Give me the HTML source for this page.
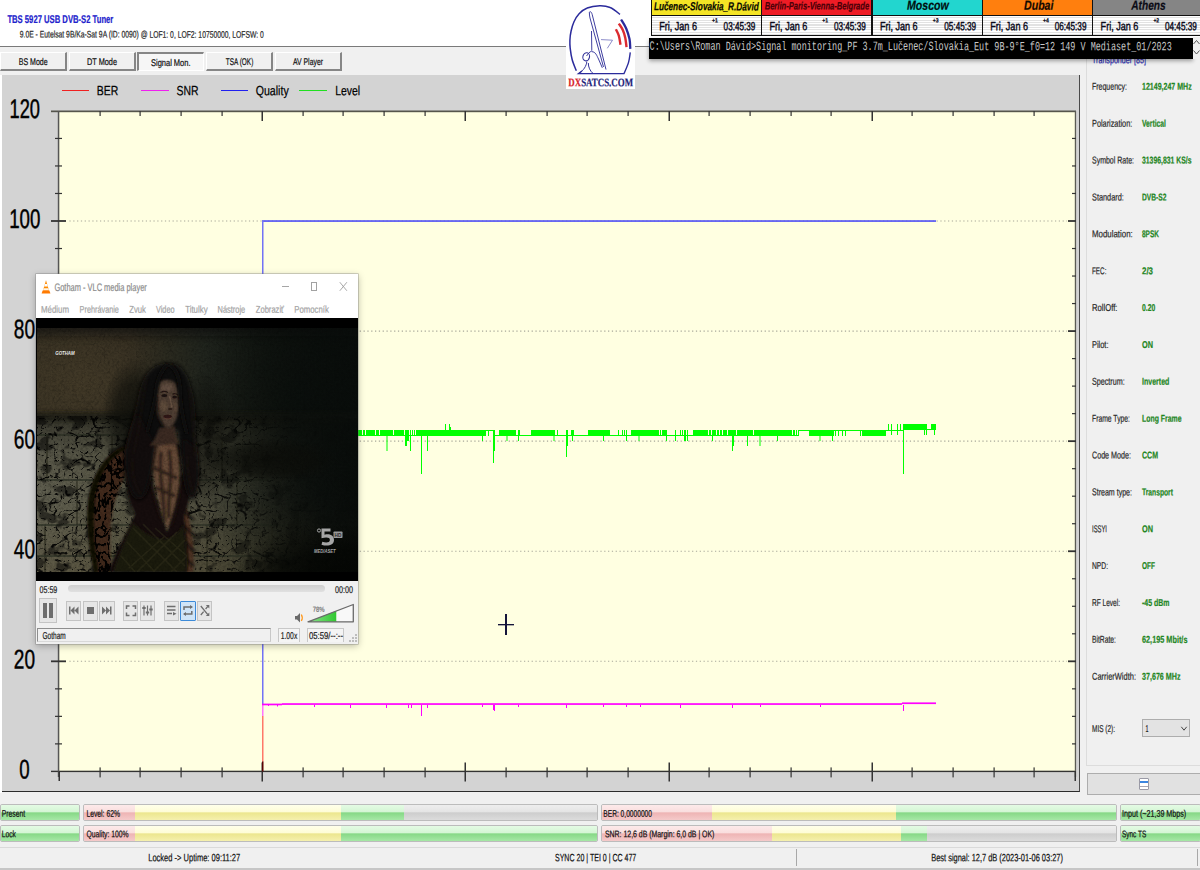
<!DOCTYPE html>
<html>
<head>
<meta charset="utf-8">
<title>Signal Monitor</title>
<style>
*{margin:0;padding:0;box-sizing:border-box;}
html,body{width:1200px;height:870px;overflow:hidden;background:#f0f0f0;font-family:"Liberation Sans",sans-serif;}
#root{position:relative;width:1200px;height:870px;overflow:hidden;background:#f0f0f0;}
.a{position:absolute;}
.t{position:absolute;white-space:nowrap;transform-origin:0 0;line-height:1;color:#000;-webkit-text-stroke:0.22px currentColor;}
.bar{position:absolute;height:17px;border:1px solid #bcbcbc;border-radius:2px;overflow:hidden;background:#e6e6e6;}
.seg{position:absolute;top:0;height:100%;}
.g{background:linear-gradient(#e4fbe4 0,#d4f5d4 46%,#86d886 52%,#a6e8a6 100%);}
.r{background:linear-gradient(#fdeaea 0,#f9dede 46%,#eeb4b4 52%,#f5caca 100%);}
.y{background:linear-gradient(#ffffea 0,#fefcd6 46%,#ece68e 52%,#f5f0ae 100%);}
.e{background:linear-gradient(#eeeeee 0,#e4e4e4 46%,#cdcdcd 52%,#dcdcdc 100%);}
</style>
</head>
<body>
<div id="root">
<div class="a" style="left:0px;top:0px;width:1200px;height:46px;background:#fff;"></div><div class="a" style="left:0px;top:46px;width:650px;height:1px;background:#7a7a7a;"></div><div class="t" style="left:7px;top:13px;font-size:11.24px;color:#2222cc;transform:translate(0.40px,0.90px) scaleX(0.6824) rotate(0.04deg);font-weight:bold;">TBS 5927 USB DVB-S2 Tuner</div><div class="t" style="left:19px;top:29px;font-size:9.54px;color:#2a2a2a;transform:translate(0.80px,0.50px) scaleX(0.7107) rotate(0.04deg);">9.0E - Eutelsat 9B/Ka-Sat 9A (ID: 0090) @ LOF1: 0, LOF2: 10750000, LOFSW: 0</div><div class="a" style="left:0px;top:52px;width:67px;height:19px;background:#f0f0f0;border-top:1px solid #fff;border-left:1px solid #fff;border-right:2px solid #868686;border-bottom:2px solid #868686;"></div><div class="a" style="left:69px;top:52px;width:66.5px;height:19px;background:#f0f0f0;border-top:1px solid #fff;border-left:1px solid #fff;border-right:2px solid #868686;border-bottom:2px solid #868686;"></div><div class="a" style="left:137px;top:52px;width:67px;height:19px;background:#f6f6f6;border-top:2px solid #868686;border-left:2px solid #868686;border-right:1px solid #fff;border-bottom:1px solid #fff;"></div><div class="a" style="left:206px;top:52px;width:67px;height:19px;background:#f0f0f0;border-top:1px solid #fff;border-left:1px solid #fff;border-right:2px solid #868686;border-bottom:2px solid #868686;"></div><div class="a" style="left:275px;top:52px;width:67px;height:19px;background:#f0f0f0;border-top:1px solid #fff;border-left:1px solid #fff;border-right:2px solid #868686;border-bottom:2px solid #868686;"></div><div class="t" style="left:18px;top:57px;font-size:9.75px;color:#111;transform:translate(0.70px,0.00px) scaleX(0.7231) rotate(0.04deg);">BS Mode</div><div class="t" style="left:87px;top:57px;font-size:9.75px;color:#111;transform:translate(0.00px,0.00px) scaleX(0.7515) rotate(0.04deg);">DT Mode</div><div class="t" style="left:151px;top:58px;font-size:9.75px;color:#111;transform:translate(0.00px,0.00px) scaleX(0.7672) rotate(0.04deg);">Signal Mon.</div><div class="t" style="left:225px;top:57px;font-size:9.75px;color:#111;transform:translate(0.80px,0.00px) scaleX(0.6592) rotate(0.04deg);">TSA (OK)</div><div class="t" style="left:293px;top:57px;font-size:9.75px;color:#111;transform:translate(0.00px,0.00px) scaleX(0.7037) rotate(0.04deg);">AV Player</div><div class="a" style="left:0px;top:75px;width:1.5px;height:718px;background:#fff;"></div><div class="a" style="left:1.5px;top:75px;width:1078px;height:716.6px;background:#d3d3d3;border-right:1.2px solid #4a4a4a;border-bottom:1.3px solid #2c2c2c;"></div><div class="a" style="left:59px;top:112px;width:1016px;height:659.5px;background:#ffffe1;"></div><svg class="a" style="left:0;top:0;" width="1200" height="870" viewBox="0 0 1200 870"><g stroke="#a8a89a" stroke-width="1.1" stroke-dasharray="1.25 2.57"><line x1="69.4" y1="661.3199999999999" x2="1067" y2="661.3199999999999"/><line x1="69.4" y1="551.24" x2="1067" y2="551.24"/><line x1="69.4" y1="441.16" x2="1067" y2="441.16"/><line x1="69.4" y1="331.08000000000004" x2="1067" y2="331.08000000000004"/><line x1="69.4" y1="221.0" x2="1067" y2="221.0"/></g><rect x="51" y="110.5" width="1025" height="1.7" fill="#55554c"/><rect x="51" y="770.7" width="1025" height="1.4" fill="#333"/><rect x="57.8" y="111" width="1.5" height="666" fill="#555"/><rect x="1074.8" y="111" width="1.3" height="666" fill="#5c5c54"/><rect x="58.5" y="771" width="1.5" height="10" fill="#333"/><rect x="99.5" y="767.4" width="1.2" height="10" fill="#333"/><rect x="99.5" y="111" width="1.2" height="5" fill="#333"/><rect x="139.5" y="767.4" width="1.2" height="10" fill="#333"/><rect x="139.5" y="111" width="1.2" height="5" fill="#333"/><rect x="180.5" y="767.4" width="1.2" height="10" fill="#333"/><rect x="180.5" y="111" width="1.2" height="5" fill="#333"/><rect x="221.5" y="767.4" width="1.2" height="10" fill="#333"/><rect x="221.5" y="111" width="1.2" height="5" fill="#333"/><rect x="261.5" y="762.5" width="1.5" height="19" fill="#333"/><rect x="261.5" y="111" width="1.5" height="10" fill="#333"/><rect x="302.5" y="767.4" width="1.2" height="10" fill="#333"/><rect x="302.5" y="111" width="1.2" height="5" fill="#333"/><rect x="342.5" y="767.4" width="1.2" height="10" fill="#333"/><rect x="342.5" y="111" width="1.2" height="5" fill="#333"/><rect x="383.5" y="767.4" width="1.2" height="10" fill="#333"/><rect x="383.5" y="111" width="1.2" height="5" fill="#333"/><rect x="424.5" y="767.4" width="1.2" height="10" fill="#333"/><rect x="424.5" y="111" width="1.2" height="5" fill="#333"/><rect x="464.5" y="762.5" width="1.5" height="19" fill="#333"/><rect x="464.5" y="111" width="1.5" height="10" fill="#333"/><rect x="505.5" y="767.4" width="1.2" height="10" fill="#333"/><rect x="505.5" y="111" width="1.2" height="5" fill="#333"/><rect x="546.5" y="767.4" width="1.2" height="10" fill="#333"/><rect x="546.5" y="111" width="1.2" height="5" fill="#333"/><rect x="586.5" y="767.4" width="1.2" height="10" fill="#333"/><rect x="586.5" y="111" width="1.2" height="5" fill="#333"/><rect x="627.5" y="767.4" width="1.2" height="10" fill="#333"/><rect x="627.5" y="111" width="1.2" height="5" fill="#333"/><rect x="668.5" y="762.5" width="1.5" height="19" fill="#333"/><rect x="668.5" y="111" width="1.5" height="10" fill="#333"/><rect x="708.5" y="767.4" width="1.2" height="10" fill="#333"/><rect x="708.5" y="111" width="1.2" height="5" fill="#333"/><rect x="749.5" y="767.4" width="1.2" height="10" fill="#333"/><rect x="749.5" y="111" width="1.2" height="5" fill="#333"/><rect x="790.5" y="767.4" width="1.2" height="10" fill="#333"/><rect x="790.5" y="111" width="1.2" height="5" fill="#333"/><rect x="830.5" y="767.4" width="1.2" height="10" fill="#333"/><rect x="830.5" y="111" width="1.2" height="5" fill="#333"/><rect x="871.5" y="762.5" width="1.5" height="19" fill="#333"/><rect x="871.5" y="111" width="1.5" height="10" fill="#333"/><rect x="911.5" y="767.4" width="1.2" height="10" fill="#333"/><rect x="911.5" y="111" width="1.2" height="5" fill="#333"/><rect x="952.5" y="767.4" width="1.2" height="10" fill="#333"/><rect x="952.5" y="111" width="1.2" height="5" fill="#333"/><rect x="993.5" y="767.4" width="1.2" height="10" fill="#333"/><rect x="993.5" y="111" width="1.2" height="5" fill="#333"/><rect x="1033.5" y="767.4" width="1.2" height="10" fill="#333"/><rect x="1033.5" y="111" width="1.2" height="5" fill="#333"/><rect x="1074.5" y="771" width="1.5" height="10" fill="#333"/><rect x="55" y="743.28" width="7" height="1.2" fill="#333"/><rect x="1072" y="743.28" width="4" height="1.2" fill="#333"/><rect x="55" y="715.76" width="7" height="1.2" fill="#333"/><rect x="1072" y="715.76" width="4" height="1.2" fill="#333"/><rect x="55" y="688.24" width="7" height="1.2" fill="#333"/><rect x="1072" y="688.24" width="4" height="1.2" fill="#333"/><rect x="51" y="660.42" width="15" height="1.8" fill="#333"/><rect x="1068" y="660.42" width="8" height="1.8" fill="#333"/><rect x="55" y="633.1999999999999" width="7" height="1.2" fill="#333"/><rect x="1072" y="633.1999999999999" width="4" height="1.2" fill="#333"/><rect x="55" y="605.68" width="7" height="1.2" fill="#333"/><rect x="1072" y="605.68" width="4" height="1.2" fill="#333"/><rect x="55" y="578.16" width="7" height="1.2" fill="#333"/><rect x="1072" y="578.16" width="4" height="1.2" fill="#333"/><rect x="51" y="550.34" width="15" height="1.8" fill="#333"/><rect x="1068" y="550.34" width="8" height="1.8" fill="#333"/><rect x="55" y="523.12" width="7" height="1.2" fill="#333"/><rect x="1072" y="523.12" width="4" height="1.2" fill="#333"/><rect x="55" y="495.59999999999997" width="7" height="1.2" fill="#333"/><rect x="1072" y="495.59999999999997" width="4" height="1.2" fill="#333"/><rect x="55" y="468.08" width="7" height="1.2" fill="#333"/><rect x="1072" y="468.08" width="4" height="1.2" fill="#333"/><rect x="51" y="440.26000000000005" width="15" height="1.8" fill="#333"/><rect x="1068" y="440.26000000000005" width="8" height="1.8" fill="#333"/><rect x="55" y="413.03999999999996" width="7" height="1.2" fill="#333"/><rect x="1072" y="413.03999999999996" width="4" height="1.2" fill="#333"/><rect x="55" y="385.52" width="7" height="1.2" fill="#333"/><rect x="1072" y="385.52" width="4" height="1.2" fill="#333"/><rect x="55" y="358.0" width="7" height="1.2" fill="#333"/><rect x="1072" y="358.0" width="4" height="1.2" fill="#333"/><rect x="51" y="330.18000000000006" width="15" height="1.8" fill="#333"/><rect x="1068" y="330.18000000000006" width="8" height="1.8" fill="#333"/><rect x="55" y="302.96" width="7" height="1.2" fill="#333"/><rect x="1072" y="302.96" width="4" height="1.2" fill="#333"/><rect x="55" y="275.44" width="7" height="1.2" fill="#333"/><rect x="1072" y="275.44" width="4" height="1.2" fill="#333"/><rect x="55" y="247.92" width="7" height="1.2" fill="#333"/><rect x="1072" y="247.92" width="4" height="1.2" fill="#333"/><rect x="51" y="220.1" width="15" height="1.8" fill="#333"/><rect x="1068" y="220.1" width="8" height="1.8" fill="#333"/><rect x="55" y="192.88000000000002" width="7" height="1.2" fill="#333"/><rect x="1072" y="192.88000000000002" width="4" height="1.2" fill="#333"/><rect x="55" y="165.36000000000004" width="7" height="1.2" fill="#333"/><rect x="1072" y="165.36000000000004" width="4" height="1.2" fill="#333"/><rect x="55" y="137.84000000000006" width="7" height="1.2" fill="#333"/><rect x="1072" y="137.84000000000006" width="4" height="1.2" fill="#333"/><rect x="262" y="220.2" width="674" height="1.7" fill="#5858f4"/><rect x="262" y="221" width="1.5" height="483" fill="#7272f6"/><rect x="262" y="704" width="1.5" height="12" fill="#ff74ff"/><rect x="262" y="716" width="1.5" height="45.5" fill="#ff7868"/><rect x="262" y="761.4" width="1.5" height="10" fill="#5a0000"/><rect x="262" y="703.6" width="20" height="1.7" fill="#ff00ff"/><rect x="282" y="703.2" width="620" height="1.7" fill="#ff00ff"/><rect x="902" y="702.4" width="34" height="1.7" fill="#ff00ff"/><rect x="268" y="705" width="1" height="1" fill="#ff00ff"/><rect x="277" y="705" width="1" height="1.5" fill="#ff00ff"/><rect x="314" y="705" width="1" height="2" fill="#ff00ff"/><rect x="350" y="705" width="1" height="3" fill="#ff00ff"/><rect x="386" y="705" width="1" height="3" fill="#ff00ff"/><rect x="408" y="705" width="1" height="3" fill="#ff00ff"/><rect x="411" y="705" width="1" height="3" fill="#ff00ff"/><rect x="421" y="705" width="1" height="11" fill="#ff00ff"/><rect x="427" y="705" width="1" height="3" fill="#ff00ff"/><rect x="482" y="705" width="1" height="2" fill="#ff00ff"/><rect x="493" y="705" width="1" height="5" fill="#ff00ff"/><rect x="494" y="705" width="1" height="6" fill="#ff00ff"/><rect x="518" y="705" width="1" height="2" fill="#ff00ff"/><rect x="566" y="705" width="1" height="3" fill="#ff00ff"/><rect x="603" y="705" width="1" height="2" fill="#ff00ff"/><rect x="626" y="705" width="1" height="2" fill="#ff00ff"/><rect x="640" y="705" width="1" height="2" fill="#ff00ff"/><rect x="680" y="705" width="1" height="3" fill="#ff00ff"/><rect x="732" y="705" width="1" height="3" fill="#ff00ff"/><rect x="760" y="705" width="1" height="2" fill="#ff00ff"/><rect x="820" y="705" width="1" height="2" fill="#ff00ff"/><rect x="903" y="705" width="1" height="6" fill="#ff00ff"/><rect x="358" y="430" width="46" height="6" fill="#00ff00"/><rect x="404" y="435" width="12" height="1" fill="#00ff00"/><rect x="416" y="430" width="70" height="6" fill="#00ff00"/><rect x="486" y="430" width="8" height="1" fill="#00ff00"/><rect x="494" y="435" width="5" height="1" fill="#00ff00"/><rect x="499" y="430" width="17" height="6" fill="#00ff00"/><rect x="516" y="435" width="15" height="1" fill="#00ff00"/><rect x="531" y="430" width="24" height="6" fill="#00ff00"/><rect x="555" y="435" width="33" height="1" fill="#00ff00"/><rect x="588" y="430" width="22" height="6" fill="#00ff00"/><rect x="610" y="435" width="21" height="1" fill="#00ff00"/><rect x="631" y="430" width="36" height="6" fill="#00ff00"/><rect x="667" y="435" width="26" height="1" fill="#00ff00"/><rect x="693" y="430" width="106" height="6" fill="#00ff00"/><rect x="799" y="430" width="10" height="1" fill="#00ff00"/><rect x="809" y="430" width="25" height="6" fill="#00ff00"/><rect x="834" y="430" width="29" height="1" fill="#00ff00"/><rect x="863" y="430" width="23" height="6" fill="#00ff00"/><rect x="886" y="430" width="17" height="1" fill="#00ff00"/><rect x="903" y="424" width="24" height="6" fill="#00ff00"/><rect x="927" y="429" width="4" height="1" fill="#00ff00"/><rect x="931" y="424" width="5" height="6" fill="#00ff00"/><rect x="362" y="430" width="1" height="5" fill="#ffffe1"/><rect x="365" y="430" width="1" height="5" fill="#ffffe1"/><rect x="375" y="430" width="1" height="5" fill="#ffffe1"/><rect x="379" y="430" width="1" height="5" fill="#ffffe1"/><rect x="393" y="430" width="1" height="5" fill="#ffffe1"/><rect x="412" y="430" width="1" height="6" fill="#00ff00"/><rect x="414" y="430" width="1" height="6" fill="#00ff00"/><rect x="488" y="430" width="1" height="6" fill="#00ff00"/><rect x="519" y="430" width="1" height="6" fill="#00ff00"/><rect x="557" y="430" width="1" height="6" fill="#00ff00"/><rect x="571" y="430" width="1" height="6" fill="#00ff00"/><rect x="573" y="430" width="1" height="6" fill="#00ff00"/><rect x="618" y="430" width="1" height="6" fill="#00ff00"/><rect x="622" y="430" width="1" height="6" fill="#00ff00"/><rect x="624" y="430" width="1" height="6" fill="#00ff00"/><rect x="659" y="430" width="1" height="5" fill="#ffffe1"/><rect x="661" y="430" width="1" height="5" fill="#ffffe1"/><rect x="666" y="430" width="1" height="5" fill="#ffffe1"/><rect x="680" y="430" width="1" height="6" fill="#00ff00"/><rect x="682" y="430" width="1" height="6" fill="#00ff00"/><rect x="685" y="430" width="1" height="6" fill="#00ff00"/><rect x="708" y="430" width="1" height="5" fill="#ffffe1"/><rect x="711" y="430" width="1" height="5" fill="#ffffe1"/><rect x="716" y="430" width="1" height="5" fill="#ffffe1"/><rect x="719" y="430" width="1" height="5" fill="#ffffe1"/><rect x="722" y="430" width="1" height="5" fill="#ffffe1"/><rect x="727" y="430" width="1" height="5" fill="#ffffe1"/><rect x="733" y="430" width="1" height="5" fill="#ffffe1"/><rect x="736" y="430" width="1" height="5" fill="#ffffe1"/><rect x="753" y="430" width="1" height="5" fill="#ffffe1"/><rect x="792" y="430" width="1" height="5" fill="#ffffe1"/><rect x="795" y="430" width="1" height="5" fill="#ffffe1"/><rect x="797" y="430" width="1" height="5" fill="#ffffe1"/><rect x="835" y="430" width="1" height="6" fill="#00ff00"/><rect x="838" y="430" width="1" height="6" fill="#00ff00"/><rect x="842" y="430" width="1" height="6" fill="#00ff00"/><rect x="845" y="430" width="1" height="6" fill="#00ff00"/><rect x="860" y="430" width="1" height="6" fill="#00ff00"/><rect x="862" y="430" width="1" height="6" fill="#00ff00"/><rect x="445" y="424" width="1" height="6" fill="#00ff00"/><rect x="449" y="424" width="1" height="6" fill="#00ff00"/><rect x="450" y="427" width="1" height="3" fill="#00ff00"/><rect x="888" y="424" width="1" height="6" fill="#00ff00"/><rect x="891" y="424" width="1" height="6" fill="#00ff00"/><rect x="897" y="424" width="1" height="6" fill="#00ff00"/><rect x="900" y="424" width="1" height="6" fill="#00ff00"/><rect x="386.5" y="430" width="1" height="21" fill="#00ff00"/><rect x="405" y="430" width="1" height="16" fill="#00ff00"/><rect x="406" y="430" width="1" height="16" fill="#00ff00"/><rect x="407" y="430" width="1" height="11" fill="#00ff00"/><rect x="408" y="430" width="1" height="11" fill="#00ff00"/><rect x="410" y="430" width="1" height="21" fill="#00ff00"/><rect x="421" y="430" width="1" height="44" fill="#00ff00"/><rect x="427" y="430" width="1" height="21" fill="#00ff00"/><rect x="482" y="430" width="1" height="11" fill="#00ff00"/><rect x="493" y="430" width="1" height="33" fill="#00ff00"/><rect x="494" y="430" width="1" height="21" fill="#00ff00"/><rect x="506.5" y="430" width="1" height="11" fill="#00ff00"/><rect x="518" y="430" width="1" height="11" fill="#00ff00"/><rect x="553.5" y="430" width="1" height="11" fill="#00ff00"/><rect x="566" y="430" width="1" height="27" fill="#00ff00"/><rect x="567" y="430" width="1" height="16" fill="#00ff00"/><rect x="572" y="430" width="1" height="11" fill="#00ff00"/><rect x="603" y="430" width="1" height="11" fill="#00ff00"/><rect x="626" y="430" width="1" height="11" fill="#00ff00"/><rect x="638.5" y="430" width="1" height="11" fill="#00ff00"/><rect x="666" y="430" width="1" height="11" fill="#00ff00"/><rect x="675" y="430" width="1" height="11" fill="#00ff00"/><rect x="684" y="430" width="1" height="11" fill="#00ff00"/><rect x="685" y="430" width="1" height="11" fill="#00ff00"/><rect x="687" y="430" width="1" height="11" fill="#00ff00"/><rect x="712" y="430" width="1" height="11" fill="#00ff00"/><rect x="732" y="430" width="1" height="21" fill="#00ff00"/><rect x="733" y="430" width="1" height="16" fill="#00ff00"/><rect x="747" y="430" width="1" height="16" fill="#00ff00"/><rect x="759.5" y="430" width="1" height="16" fill="#00ff00"/><rect x="777" y="430" width="1" height="11" fill="#00ff00"/><rect x="819.5" y="430" width="1" height="11" fill="#00ff00"/><rect x="832" y="430" width="1" height="11" fill="#00ff00"/><rect x="903" y="430" width="1" height="44" fill="#00ff00"/><rect x="891" y="430" width="1" height="5" fill="#00ff00"/><rect x="897" y="430" width="1" height="5" fill="#00ff00"/><rect x="924" y="430" width="1" height="5" fill="#00ff00"/><rect x="926" y="430" width="1" height="5" fill="#00ff00"/><rect x="934" y="430" width="1" height="5" fill="#00ff00"/></svg><div class="t" style="left:9px;top:96px;font-size:27px;color:#000;transform:translate(0.50px,0.02px) scaleX(0.6770) rotate(0.04deg);-webkit-text-stroke:0.45px #000;">120</div><div class="t" style="left:9px;top:206px;font-size:27px;color:#000;transform:translate(0.20px,0.10px) scaleX(0.6948) rotate(0.04deg);-webkit-text-stroke:0.45px #000;">100</div><div class="t" style="left:13px;top:316px;font-size:27px;color:#000;transform:translate(0.80px,0.18px) scaleX(0.7059) rotate(0.04deg);-webkit-text-stroke:0.45px #000;">80</div><div class="t" style="left:13px;top:426px;font-size:27px;color:#000;transform:translate(0.80px,0.26px) scaleX(0.7059) rotate(0.04deg);-webkit-text-stroke:0.45px #000;">60</div><div class="t" style="left:13px;top:536px;font-size:27px;color:#000;transform:translate(0.80px,0.34px) scaleX(0.7059) rotate(0.04deg);-webkit-text-stroke:0.45px #000;">40</div><div class="t" style="left:13px;top:646px;font-size:27px;color:#000;transform:translate(0.80px,0.42px) scaleX(0.7059) rotate(0.04deg);-webkit-text-stroke:0.45px #000;">20</div><div class="t" style="left:19px;top:756px;font-size:27px;color:#000;transform:translate(0.20px,0.50px) scaleX(0.6926) rotate(0.04deg);-webkit-text-stroke:0.45px #000;">0</div><div class="a" style="left:61.5px;top:90px;width:27.5px;height:1px;background:#f02020;"></div><div class="a" style="left:141.3px;top:90px;width:27.5px;height:1px;background:#f020f0;"></div><div class="a" style="left:220.5px;top:90px;width:27.5px;height:1px;background:#2020f0;"></div><div class="a" style="left:299px;top:90px;width:27.5px;height:1px;background:#20e020;"></div><div class="t" style="left:96px;top:84px;font-size:13.5px;color:#000;transform:translate(0.70px,0.20px) scaleX(0.7745) rotate(0.04deg);">BER</div><div class="t" style="left:176px;top:84px;font-size:13.5px;color:#000;transform:translate(0.50px,0.20px) scaleX(0.7718) rotate(0.04deg);">SNR</div><div class="t" style="left:255px;top:84px;font-size:13.5px;color:#000;transform:translate(0.70px,0.20px) scaleX(0.7854) rotate(0.04deg);">Quality</div><div class="t" style="left:335px;top:84px;font-size:13.5px;color:#000;transform:translate(0.20px,0.20px) scaleX(0.7746) rotate(0.04deg);">Level</div><div class="a" style="left:505px;top:614px;width:2px;height:21px;background:#15153a;"></div><div class="a" style="left:498px;top:624px;width:16px;height:1px;background:#15153a;"></div><div class="a" style="left:498px;top:625px;width:16px;height:1px;background:rgba(21,21,58,0.35);"></div><div class="a" style="left:1086px;top:58px;width:114px;height:708px;background:#f0f0f0;border-left:1px solid #dcdcdc;border-bottom:1px solid #dcdcdc;"></div><div class="t" style="left:1092px;top:55px;font-size:9.96px;color:#2a2ab0;transform:translate(0.00px,0.20px) scaleX(0.7154) rotate(0.04deg);">Transponder [85]</div><div class="t" style="left:1092px;top:81px;font-size:9.96px;color:#2a2a2a;transform:translate(0.00px,0.80px) scaleX(0.7024) rotate(0.04deg);">Frequency:</div><div class="t" style="left:1142px;top:81px;font-size:9.96px;color:#1f861f;transform:translate(0.00px,0.80px) scaleX(0.7068) rotate(0.04deg);font-weight:bold;">12149,247 MHz</div><div class="t" style="left:1092px;top:118px;font-size:9.96px;color:#2a2a2a;transform:translate(0.00px,0.67px) scaleX(0.7353) rotate(0.04deg);">Polarization:</div><div class="t" style="left:1142px;top:118px;font-size:9.96px;color:#1f861f;transform:translate(0.00px,0.67px) scaleX(0.6772) rotate(0.04deg);font-weight:bold;">Vertical</div><div class="t" style="left:1092px;top:155px;font-size:9.96px;color:#2a2a2a;transform:translate(0.00px,0.54px) scaleX(0.7025) rotate(0.04deg);">Symbol Rate:</div><div class="t" style="left:1142px;top:155px;font-size:9.96px;color:#1f861f;transform:translate(0.00px,0.54px) scaleX(0.6876) rotate(0.04deg);font-weight:bold;">31396,831 KS/s</div><div class="t" style="left:1092px;top:192px;font-size:9.96px;color:#2a2a2a;transform:translate(0.00px,0.41px) scaleX(0.7362) rotate(0.04deg);">Standard:</div><div class="t" style="left:1142px;top:192px;font-size:9.96px;color:#1f861f;transform:translate(0.00px,0.41px) scaleX(0.6679) rotate(0.04deg);font-weight:bold;">DVB-S2</div><div class="t" style="left:1092px;top:229px;font-size:9.96px;color:#2a2a2a;transform:translate(0.00px,0.28px) scaleX(0.7923) rotate(0.04deg);">Modulation:</div><div class="t" style="left:1142px;top:229px;font-size:9.96px;color:#1f861f;transform:translate(0.00px,0.28px) scaleX(0.6534) rotate(0.04deg);font-weight:bold;">8PSK</div><div class="t" style="left:1092px;top:266px;font-size:9.96px;color:#2a2a2a;transform:translate(0.00px,0.15px) scaleX(0.6347) rotate(0.04deg);">FEC:</div><div class="t" style="left:1142px;top:266px;font-size:9.96px;color:#1f861f;transform:translate(0.00px,0.15px) scaleX(0.7945) rotate(0.04deg);font-weight:bold;">2/3</div><div class="t" style="left:1092px;top:303px;font-size:9.96px;color:#2a2a2a;transform:translate(0.00px,0.02px) scaleX(0.7691) rotate(0.04deg);">RollOff:</div><div class="t" style="left:1142px;top:303px;font-size:9.96px;color:#1f861f;transform:translate(0.00px,0.02px) scaleX(0.6861) rotate(0.04deg);font-weight:bold;">0.20</div><div class="t" style="left:1092px;top:339px;font-size:9.96px;color:#2a2a2a;transform:translate(0.00px,0.89px) scaleX(0.7452) rotate(0.04deg);">Pilot:</div><div class="t" style="left:1142px;top:339px;font-size:9.96px;color:#1f861f;transform:translate(0.00px,0.89px) scaleX(0.7363) rotate(0.04deg);font-weight:bold;">ON</div><div class="t" style="left:1092px;top:376px;font-size:9.96px;color:#2a2a2a;transform:translate(0.00px,0.76px) scaleX(0.7204) rotate(0.04deg);">Spectrum:</div><div class="t" style="left:1142px;top:376px;font-size:9.96px;color:#1f861f;transform:translate(0.00px,0.76px) scaleX(0.7072) rotate(0.04deg);font-weight:bold;">Inverted</div><div class="t" style="left:1092px;top:413px;font-size:9.96px;color:#2a2a2a;transform:translate(0.00px,0.63px) scaleX(0.6819) rotate(0.04deg);">Frame Type:</div><div class="t" style="left:1142px;top:413px;font-size:9.96px;color:#1f861f;transform:translate(0.00px,0.63px) scaleX(0.6930) rotate(0.04deg);font-weight:bold;">Long Frame</div><div class="t" style="left:1092px;top:450px;font-size:9.96px;color:#2a2a2a;transform:translate(0.00px,0.50px) scaleX(0.7187) rotate(0.04deg);">Code Mode:</div><div class="t" style="left:1142px;top:450px;font-size:9.96px;color:#1f861f;transform:translate(0.00px,0.50px) scaleX(0.7054) rotate(0.04deg);font-weight:bold;">CCM</div><div class="t" style="left:1092px;top:487px;font-size:9.96px;color:#2a2a2a;transform:translate(0.00px,0.37px) scaleX(0.7084) rotate(0.04deg);">Stream type:</div><div class="t" style="left:1142px;top:487px;font-size:9.96px;color:#1f861f;transform:translate(0.00px,0.37px) scaleX(0.6749) rotate(0.04deg);font-weight:bold;">Transport</div><div class="t" style="left:1092px;top:524px;font-size:9.96px;color:#2a2a2a;transform:translate(0.00px,0.24px) scaleX(0.5890) rotate(0.04deg);">ISSYI</div><div class="t" style="left:1142px;top:524px;font-size:9.96px;color:#1f861f;transform:translate(0.00px,0.24px) scaleX(0.7363) rotate(0.04deg);font-weight:bold;">ON</div><div class="t" style="left:1092px;top:561px;font-size:9.96px;color:#2a2a2a;transform:translate(0.00px,0.11px) scaleX(0.6724) rotate(0.04deg);">NPD:</div><div class="t" style="left:1142px;top:561px;font-size:9.96px;color:#1f861f;transform:translate(0.00px,0.11px) scaleX(0.6528) rotate(0.04deg);font-weight:bold;">OFF</div><div class="t" style="left:1092px;top:597px;font-size:9.96px;color:#2a2a2a;transform:translate(0.00px,0.98px) scaleX(0.6569) rotate(0.04deg);">RF Level:</div><div class="t" style="left:1142px;top:597px;font-size:9.96px;color:#1f861f;transform:translate(0.00px,0.98px) scaleX(0.6998) rotate(0.04deg);font-weight:bold;">-45 dBm</div><div class="t" style="left:1092px;top:634px;font-size:9.96px;color:#2a2a2a;transform:translate(0.00px,0.85px) scaleX(0.6774) rotate(0.04deg);">BitRate:</div><div class="t" style="left:1142px;top:634px;font-size:9.96px;color:#1f861f;transform:translate(0.00px,0.85px) scaleX(0.7338) rotate(0.04deg);font-weight:bold;">62,195 Mbit/s</div><div class="t" style="left:1092px;top:671px;font-size:9.96px;color:#2a2a2a;transform:translate(0.00px,0.72px) scaleX(0.7500) rotate(0.04deg);">CarrierWidth:</div><div class="t" style="left:1142px;top:671px;font-size:9.96px;color:#1f861f;transform:translate(0.00px,0.72px) scaleX(0.7169) rotate(0.04deg);font-weight:bold;">37,676 MHz</div><div class="t" style="left:1092px;top:724px;font-size:9.96px;color:#2a2a2a;transform:translate(0.00px,0.00px) scaleX(0.6494) rotate(0.04deg);">MIS (2):</div><div class="a" style="left:1142px;top:719px;width:48px;height:18px;background:#e3e3e3;border:1px solid #adadad;"></div><div class="t" style="left:1145px;top:724px;font-size:9.96px;color:#111;transform:translate(0.50px,0.00px) scaleX(0.5416) rotate(0.04deg);">1</div><svg class="a" style="left:1178px;top:724px;" width="10" height="8" viewBox="0 0 10 8"><path d="M3.3 2.8 L6 6.2 L8.7 2.8" fill="none" stroke="#444" stroke-width="1"/></svg><div class="a" style="left:1087px;top:773px;width:114px;height:22px;background:#e1e1e1;border:1px solid #adadad;"></div><div class="a" style="left:1139px;top:777.5px;width:10px;height:12.5px;background:#fff;border:1px solid #9a9aa6;border-radius:1px;"></div><div class="a" style="left:1140px;top:780.5px;width:8px;height:2.8px;background:#3b86e0;"></div><div class="a" style="left:1140px;top:786px;width:8px;height:1px;background:#a8a8b4;"></div><div class="a" style="left:566px;top:0px;width:69px;height:89px;background:#fff;"></div><svg class="a" style="left:566px;top:0;" width="69" height="89" viewBox="0 0 69 89"><path d="M10.3 70.7 C9.6 68.9 7.2 63.5 6.2 59.8 C5.2 56.1 4.6 51.6 4.2 48.3 C3.8 45.0 3.8 43.1 3.9 40.2 C4.0 37.3 4.4 34.1 5.1 31.0 C5.8 27.9 6.7 24.7 8.0 21.8 C9.3 18.9 10.9 16.1 13.1 13.8 C15.3 11.5 17.8 9.3 21.2 8.0 C24.6 6.6 30.0 5.8 33.8 5.7 C37.6 5.6 40.8 6.0 44.2 7.5 C47.6 8.9 52.4 13.2 54.0 14.4" fill="none" stroke="#2b2b9c" stroke-width="1.5"/><path d="M55.1 19.5 C56.0 21.0 58.9 25.4 60.3 28.7 C61.7 32.0 62.8 35.7 63.5 39.1 C64.2 42.5 64.2 47.3 64.3 48.9" fill="none" stroke="#2b2b9c" stroke-width="2.3"/><path d="M64.3 52.3 C64.0 53.9 63.6 58.6 62.6 62.1 C61.6 65.7 58.8 71.7 58.0 73.6 L12.6 73.6 L16 71" fill="none" stroke="#2b2b9c" stroke-width="1.4"/><path d="M52.8 23.6 C53.5 24.7 55.7 27.5 56.8 29.9 C57.9 32.3 58.7 35.0 59.3 37.9 C59.9 40.8 60.3 45.6 60.5 47.1" fill="none" stroke="#db2b30" stroke-width="2.4"/><path d="M49.9 29.3 C50.4 30.4 52.0 33.0 52.8 35.6 C53.6 38.2 54.2 43.3 54.5 44.8" fill="none" stroke="#db2b30" stroke-width="2.4"/><path d="M23.4 12.2 C24.2 10.8 25.6 12.2 26.2 14.5 L40 69.5 M23.4 12.2 C23.2 14 23.6 16 24 18 L37.5 67 " fill="none" stroke="#34349a" stroke-width="0.95"/><path d="M25.5 31 L25.8 50.6 M25.8 51 C23.5 52 22 53.5 20.6 56 M25.8 51.7 C29.5 51.5 31 56 32.5 59 L36.3 67.8" fill="none" stroke="#34349a" stroke-width="0.95"/><ellipse cx="20.2" cy="56.8" rx="3.3" ry="4.1" fill="none" stroke="#34349a" stroke-width="1.1" transform="rotate(15 20.2 56.8)"/><path d="M20.8 61.5 C20.5 66 17.5 70.5 12.8 73.4 M22.3 63 C22.3 67 24 71 27 73.4" fill="none" stroke="#34349a" stroke-width="1"/><path d="M35 39.6 L46.5 40.2 L41.3 48.3" fill="none" stroke="#7070bc" stroke-width="0.8"/></svg><div class="t" style="left:568px;top:77px;font-size:11.5px;color:#1f1f7a;transform:translate(0.30px,0.20px) scaleX(0.7720) rotate(0.04deg);font-weight:bold;font-family:'Liberation Serif',serif;"><span style="color:#d8232a;">DX</span>SATCS.COM</div><div class="a" style="left:650.5px;top:0px;width:550px;height:36px;background:#111;"></div><div class="a" style="left:652.00px;top:0px;width:109px;height:14.6px;background:#f4e425;"></div><div class="a" style="left:652.00px;top:15.6px;width:109px;height:19.2px;background:repeating-linear-gradient(#fff 0,#fff 1.2px,#e2e2e2 1.2px,#e2e2e2 2.4px);"></div><div class="t" style="left:653px;top:0px;font-size:11.66px;color:#0a0a00;transform:translate(0.90px,0.30px) scaleX(0.7068) rotate(0.04deg);font-weight:bold;font-style:italic;">Lučenec-Slovakia_R.Dávid</div><div class="t" style="left:659px;top:20px;font-size:11.98px;color:#0a0a1a;transform:translate(0.20px,0.30px) scaleX(0.7570) rotate(0.04deg);-webkit-text-stroke:0.45px #0a0a1a;">Fri, Jan 6</div><div class="t" style="left:712px;top:17px;font-size:6.36px;color:#0a0a1a;transform:translate(0.00px,0.50px) scaleX(0.7998) rotate(0.04deg);font-weight:bold;">+1</div><div class="t" style="left:723px;top:20px;font-size:11.98px;color:#0a0a1a;transform:translate(0.60px,0.30px) scaleX(0.6819) rotate(0.04deg);-webkit-text-stroke:0.45px #0a0a1a;">03:45:39</div><div class="a" style="left:762.35px;top:0px;width:109px;height:14.6px;background:#ee1c25;"></div><div class="a" style="left:762.35px;top:15.6px;width:109px;height:19.2px;background:repeating-linear-gradient(#fff 0,#fff 1.2px,#e2e2e2 1.2px,#e2e2e2 2.4px);"></div><div class="t" style="left:764px;top:0px;font-size:10.81px;color:#4a0008;transform:translate(0.70px,0.40px) scaleX(0.7011) rotate(0.04deg);font-weight:bold;font-style:italic;">Berlin-Paris-Vienna-Belgrade</div><div class="t" style="left:769px;top:20px;font-size:11.98px;color:#0a0a1a;transform:translate(0.55px,0.30px) scaleX(0.7570) rotate(0.04deg);-webkit-text-stroke:0.45px #0a0a1a;">Fri, Jan 6</div><div class="t" style="left:822px;top:17px;font-size:6.36px;color:#0a0a1a;transform:translate(0.35px,0.50px) scaleX(0.7998) rotate(0.04deg);font-weight:bold;">+1</div><div class="t" style="left:833px;top:20px;font-size:11.98px;color:#0a0a1a;transform:translate(0.95px,0.30px) scaleX(0.6819) rotate(0.04deg);-webkit-text-stroke:0.45px #0a0a1a;">03:45:39</div><div class="a" style="left:872.70px;top:0px;width:109px;height:14.6px;background:#22d6cf;"></div><div class="a" style="left:872.70px;top:15.6px;width:109px;height:19.2px;background:repeating-linear-gradient(#fff 0,#fff 1.2px,#e2e2e2 1.2px,#e2e2e2 2.4px);"></div><div class="t" style="left:907px;top:-2px;font-size:13.2px;color:#001010;transform:translate(0.00px,0.70px) scaleX(0.8046) rotate(0.04deg);font-weight:bold;font-style:italic;">Moscow</div><div class="t" style="left:879px;top:20px;font-size:11.98px;color:#0a0a1a;transform:translate(0.90px,0.30px) scaleX(0.7570) rotate(0.04deg);-webkit-text-stroke:0.45px #0a0a1a;">Fri, Jan 6</div><div class="t" style="left:932px;top:17px;font-size:6.36px;color:#0a0a1a;transform:translate(0.70px,0.50px) scaleX(0.7998) rotate(0.04deg);font-weight:bold;">+3</div><div class="t" style="left:944px;top:20px;font-size:11.98px;color:#0a0a1a;transform:translate(0.30px,0.30px) scaleX(0.6819) rotate(0.04deg);-webkit-text-stroke:0.45px #0a0a1a;">05:45:39</div><div class="a" style="left:983.05px;top:0px;width:109px;height:14.6px;background:#ff7f0e;"></div><div class="a" style="left:983.05px;top:15.6px;width:109px;height:19.2px;background:repeating-linear-gradient(#fff 0,#fff 1.2px,#e2e2e2 1.2px,#e2e2e2 2.4px);"></div><div class="t" style="left:1024px;top:-2px;font-size:13.2px;color:#140800;transform:translate(0.00px,0.70px) scaleX(0.8045) rotate(0.04deg);font-weight:bold;font-style:italic;">Dubai</div><div class="t" style="left:990px;top:20px;font-size:11.98px;color:#0a0a1a;transform:translate(0.25px,0.30px) scaleX(0.7570) rotate(0.04deg);-webkit-text-stroke:0.45px #0a0a1a;">Fri, Jan 6</div><div class="t" style="left:1043px;top:17px;font-size:6.36px;color:#0a0a1a;transform:translate(0.05px,0.50px) scaleX(0.7998) rotate(0.04deg);font-weight:bold;">+4</div><div class="t" style="left:1054px;top:20px;font-size:11.98px;color:#0a0a1a;transform:translate(0.65px,0.30px) scaleX(0.6819) rotate(0.04deg);-webkit-text-stroke:0.45px #0a0a1a;">06:45:39</div><div class="a" style="left:1093.40px;top:0px;width:109px;height:14.6px;background:#858585;"></div><div class="a" style="left:1093.40px;top:15.6px;width:109px;height:19.2px;background:repeating-linear-gradient(#fff 0,#fff 1.2px,#e2e2e2 1.2px,#e2e2e2 2.4px);"></div><div class="t" style="left:1131px;top:-2px;font-size:13.2px;color:#0a0a14;transform:translate(0.30px,0.70px) scaleX(0.7689) rotate(0.04deg);font-weight:bold;font-style:italic;">Athens</div><div class="t" style="left:1100px;top:20px;font-size:11.98px;color:#0a0a1a;transform:translate(0.60px,0.30px) scaleX(0.7570) rotate(0.04deg);-webkit-text-stroke:0.45px #0a0a1a;">Fri, Jan 6</div><div class="t" style="left:1153px;top:17px;font-size:6.36px;color:#0a0a1a;transform:translate(0.40px,0.50px) scaleX(0.7998) rotate(0.04deg);font-weight:bold;">+2</div><div class="t" style="left:1165px;top:20px;font-size:11.98px;color:#0a0a1a;transform:translate(0.00px,0.30px) scaleX(0.6819) rotate(0.04deg);-webkit-text-stroke:0.45px #0a0a1a;">04:45:39</div><div class="a" style="left:649px;top:37.5px;width:544px;height:21px;background:#000;box-shadow:0 2px 4px rgba(0,0,0,0.35);"></div><div class="t" style="left:649px;top:40px;font-size:12.6px;color:#c8c8c8;transform:translate(0.60px,0.80px) scaleX(0.6708) rotate(0.04deg);font-family:'Liberation Mono',monospace;-webkit-text-stroke:0;">C:\Users\Roman Dávid&gt;Signal monitoring_PF 3.7m_Lučenec/Slovakia_Eut 9B-9°E_f0=12 149 V Mediaset_01/2023</div><div class="a" style="left:1193px;top:37px;width:7px;height:22px;background:#f0f0f0;"></div><svg class="a" style="left:1193px;top:37px;" width="7" height="21" viewBox="0 0 7 21"><path d="M0.5 7 L3.5 3.5 L6.5 7 M0.5 13.5 L3.5 17 L6.5 13.5" fill="none" stroke="#555" stroke-width="1"/></svg><div class="a" style="left:35.8px;top:274px;width:322.2px;height:370px;background:#f0f0f0;box-shadow:0 0 0 0.6px rgba(120,120,120,0.55),0 2px 7px rgba(0,0,0,0.28);"></div><div class="a" style="left:35.8px;top:274px;width:322.2px;height:44px;background:#fff;"></div><div class="a" style="left:35.8px;top:318px;width:322.2px;height:263px;background:#000;"></div><svg class="a" style="left:36.5px;top:327.5px;" width="321" height="244" viewBox="0 0 321 244">
<defs>
<filter id="b2" filterUnits="userSpaceOnUse" x="-40" y="-40" width="400" height="330"><feGaussianBlur stdDeviation="2"/></filter>
<filter id="b3" filterUnits="userSpaceOnUse" x="-40" y="-40" width="400" height="330"><feGaussianBlur stdDeviation="3"/></filter>
<filter id="b4" filterUnits="userSpaceOnUse" x="-40" y="-40" width="400" height="330"><feGaussianBlur stdDeviation="4"/></filter>
<filter id="b1" filterUnits="userSpaceOnUse" x="-40" y="-40" width="400" height="330"><feGaussianBlur stdDeviation="0.9"/></filter>
<filter id="b05" filterUnits="userSpaceOnUse" x="-40" y="-40" width="400" height="330"><feGaussianBlur stdDeviation="0.5"/></filter>
<filter id="crk" filterUnits="userSpaceOnUse" x="0" y="0" width="321" height="244">
  <feTurbulence type="turbulence" baseFrequency="0.05 0.06" numOctaves="2" seed="5" result="n"/>
  <feColorMatrix in="n" type="matrix" values="0 0 0 0 0  0 0 0 0 0  0 0 0 0 0  -16 0 0 0 1.5" result="a"/>
  <feGaussianBlur in="a" stdDeviation="0.45"/>
</filter>
<filter id="crk2" filterUnits="userSpaceOnUse" x="0" y="0" width="321" height="244">
  <feTurbulence type="fractalNoise" baseFrequency="0.06 0.07" numOctaves="3" seed="9" result="n"/>
  <feColorMatrix in="n" type="matrix" values="0 0 0 0 0  0 0 0 0 0  0 0 0 0 0  0 9 0 0 -5.0" result="a"/>
  <feGaussianBlur in="a" stdDeviation="0.7"/>
</filter>
<filter id="crk3" filterUnits="userSpaceOnUse" x="0" y="0" width="321" height="244">
  <feTurbulence type="turbulence" baseFrequency="0.11 0.12" numOctaves="2" seed="21" result="n"/>
  <feColorMatrix in="n" type="matrix" values="0 0 0 0 0  0 0 0 0 0  0 0 0 0 0  0 -14 0 0 1.5" result="a"/>
  <feGaussianBlur in="a" stdDeviation="0.4"/>
</filter>
<filter id="lace" filterUnits="userSpaceOnUse" x="0" y="0" width="321" height="244">
  <feTurbulence type="turbulence" baseFrequency="0.16 0.12" numOctaves="2" seed="4" result="n"/>
  <feColorMatrix in="n" type="matrix" values="0 0 0 0 0  0 0 0 0 0  0 0 0 0 0  -10 0 0 0 2.4" result="a"/>
  <feGaussianBlur in="a" stdDeviation="0.5" result="g"/>
  <feComposite in="g" in2="SourceGraphic" operator="in"/>
</filter>
<filter id="grn" filterUnits="userSpaceOnUse" x="0" y="0" width="321" height="244">
  <feTurbulence type="fractalNoise" baseFrequency="0.45" numOctaves="2" seed="3" result="n"/>
  <feColorMatrix in="n" type="matrix" values="0 0 0 0 0  0 0 0 0 0  0 0 0 0 0  1.2 0 0 0 -0.42"/>
</filter>
<linearGradient id="wall" x1="0" x2="1" y1="0" y2="0">
  <stop offset="0" stop-color="#3a3324"/><stop offset="0.28" stop-color="#383123"/><stop offset="0.4" stop-color="#2b2a1f"/><stop offset="0.52" stop-color="#20241d"/><stop offset="0.72" stop-color="#151a15"/><stop offset="1" stop-color="#0e120f"/>
</linearGradient>
<linearGradient id="tile" x1="0" x2="1" y1="0" y2="0">
  <stop offset="0" stop-color="#605f50"/><stop offset="0.25" stop-color="#5a5948"/><stop offset="0.5" stop-color="#504f40"/><stop offset="0.64" stop-color="#404235"/><stop offset="0.78" stop-color="#252820"/><stop offset="0.9" stop-color="#141713"/><stop offset="1" stop-color="#0c0f0c"/>
</linearGradient>
<linearGradient id="fadeW" x1="0" x2="1" y1="0" y2="0">
  <stop offset="0" stop-color="#fff"/><stop offset="0.6" stop-color="#e6e6e6"/><stop offset="0.82" stop-color="#666"/><stop offset="1" stop-color="#222"/>
</linearGradient>
<mask id="tm"><rect x="0" y="88" width="321" height="156" fill="url(#fadeW)"/></mask>
<radialGradient id="rgD" cx="0.5" cy="0.5" r="0.5"><stop offset="0" stop-color="#080c0a" stop-opacity="0.85"/><stop offset="0.5" stop-color="#080c0a" stop-opacity="0.72"/><stop offset="0.8" stop-color="#060906" stop-opacity="0.3"/><stop offset="1" stop-color="#060906" stop-opacity="0"/></radialGradient>
<radialGradient id="rgW" cx="0.5" cy="0.5" r="0.5"><stop offset="0" stop-color="#4a402b" stop-opacity="0.5"/><stop offset="1" stop-color="#4a402b" stop-opacity="0"/></radialGradient>
<radialGradient id="rgC" cx="0.5" cy="0.5" r="0.5"><stop offset="0" stop-color="#030503" stop-opacity="0.95"/><stop offset="0.6" stop-color="#030503" stop-opacity="0.7"/><stop offset="1" stop-color="#030503" stop-opacity="0"/></radialGradient>
<radialGradient id="rgS" cx="0.5" cy="0.5" r="0.5"><stop offset="0" stop-color="#0c0d09" stop-opacity="0.85"/><stop offset="0.6" stop-color="#0c0d09" stop-opacity="0.6"/><stop offset="1" stop-color="#0c0d09" stop-opacity="0"/></radialGradient>
<linearGradient id="tv" x1="0" x2="0" y1="0" y2="1"><stop offset="0" stop-color="#14140e" stop-opacity="0.55"/><stop offset="0.22" stop-color="#14140e" stop-opacity="0.12"/><stop offset="0.5" stop-color="#50401e" stop-opacity="0.0"/><stop offset="1" stop-color="#50401e" stop-opacity="0.22"/></linearGradient>
<clipPath id="fc"><rect x="0" y="0" width="321" height="244"/></clipPath>
<clipPath id="armL"><path d="M90 118 C71 124 57 146 53 172 C50 198 55 226 59 244 L75 244 C72 222 72 200 76 180 C80 160 92 140 102 126 Z"/></clipPath>
</defs>
<g clip-path="url(#fc)">
<rect x="0" y="0" width="321" height="244" fill="url(#wall)"/>
<rect x="-20" y="-14" width="361" height="22" fill="#0e100b" opacity="0.6" filter="url(#b4)"/>
<ellipse cx="45" cy="55" rx="75" ry="55" fill="url(#rgW)"/>
<!-- faint wall texture -->
<rect x="0" y="0" width="321" height="90" fill="#15150e" filter="url(#crk3)" opacity="0.12"/>
<!-- tile zone -->
<rect x="0" y="90" width="321" height="154" fill="url(#tile)"/>
<rect x="-10" y="84" width="340" height="9" fill="#1f1f17" opacity="0.8" filter="url(#b2)"/>
<rect x="0" y="90" width="321" height="154" fill="url(#tv)"/>
<g stroke="#2a2b21" stroke-width="1.3" opacity="0.85" mask="url(#tm)" filter="url(#b05)">
<path d="M0 107 H150 M0 152 H230 M0 197 H250 M0 228 H260 M10 107 V152 M75 107 V152 M40 152 V197 M70 152 V197 M8 197 V244 M70 197 V244 M225 110 V152 M200 152 V197 M170 197 V244 M235 197 V244 M185 110 V152"/>
</g>
<g mask="url(#tm)"><rect x="0" y="90" width="321" height="154" fill="#1d1e16" filter="url(#crk)" opacity="0.9"/></g>
<g mask="url(#tm)"><rect x="0" y="90" width="321" height="154" fill="#20211a" filter="url(#crk2)" opacity="0.5"/></g>
<g mask="url(#tm)"><rect x="0" y="90" width="321" height="154" fill="#1a1b14" filter="url(#crk3)" opacity="0.75"/></g>
<!-- darkness right -->
<ellipse cx="352" cy="95" rx="190" ry="250" fill="url(#rgD)"/>
<ellipse cx="232" cy="132" rx="70" ry="22" fill="url(#rgS)"/>
<ellipse cx="305" cy="262" rx="120" ry="66" fill="url(#rgC)"/>
<!-- wall shadow behind figure -->
<ellipse cx="98" cy="92" rx="34" ry="62" fill="url(#rgS)"/>
<ellipse cx="168" cy="110" rx="26" ry="70" fill="url(#rgS)" opacity="0.7"/>
<!-- arms (under hair) -->
<path d="M90 118 C71 124 57 146 53 172 C50 198 55 226 59 244 L75 244 C72 222 72 200 76 180 C80 160 92 140 102 126 Z" fill="#432c1e" filter="url(#b1)"/>
<g clip-path="url(#armL)"><rect x="50" y="115" width="60" height="130" fill="#140e08" filter="url(#lace)" opacity="0.95"/></g>
<path d="M88 118 C69 124 55 146 51 172 C48 198 53 226 57 244 L62 244 C58 222 55 196 58 170 C62 146 74 128 90 121 Z" fill="#0c0906" opacity="0.9" filter="url(#b1)"/>
<path d="M148 176 C154 196 158 216 156 244 L146 244 C148 220 147 198 143 182 Z" fill="#4e3322" opacity="0.95" filter="url(#b1)"/>
<path d="M145 182 L157 192 M146 198 L158 208 M147 214 L158 224 M147 230 L157 238" stroke="#17110a" stroke-width="2.6" opacity="0.85" filter="url(#b1)"/>
<!-- torso dress -->
<path d="M94 126 C86 150 90 170 98 186 C90 206 76 226 72 244 L150 244 C152 226 149 206 147 188 C155 168 157 146 152 128 C140 160 136 190 130 204 C124 186 112 150 108 124 Z" fill="#12100a" filter="url(#b1)"/>
<path d="M96 194 C88 212 80 230 76 244 L150 244 C150 226 148 206 146 196 C136 216 118 216 96 194 Z" fill="#1b1a11" opacity="0.95" filter="url(#b1)"/>
<g opacity="0.5"><path d="M96 200 L140 244 M106 196 L148 238 M118 200 L150 228 M90 214 L118 244 M84 228 L98 244 M140 204 L100 244 M148 212 L116 244 M128 208 L92 240 M150 228 L134 244" stroke="#34331f" stroke-width="1.6" filter="url(#b05)"/></g>
<!-- chest skin -->
<path d="M116 112 C112 124 114 140 118 156 C122 176 127 192 130 202 C135 190 142 170 143 150 C144 134 142 122 138 110 Z" fill="#684c38" opacity="0.95" filter="url(#b1)"/>
<path d="M114 114 C110 136 114 162 124 190 M140 114 C147 138 145 168 134 198 M124 124 C121 148 128 170 127 194 M132 122 C137 148 130 170 132 190 M117 140 L140 150 M119 160 L138 168" stroke="#1d120c" stroke-width="2.6" fill="none" opacity="0.8" filter="url(#b1)"/>
<!-- hair -->
<path d="M131 35 C112 35 104 52 101 70 C98 88 92 100 88 118 C84 136 88 152 94 166 C100 176 108 172 112 160 C116 146 116 128 120 112 L124 100 L140 102 C142 116 144 134 146 150 C148 164 152 176 158 170 C164 158 162 136 160 120 C158 100 160 84 156 66 C152 48 146 35 131 35 Z" fill="#100c0a" filter="url(#b2)"/>
<path d="M100 84 C92 104 86 124 90 146 C92 160 98 170 104 170 C112 160 114 136 118 116 Z M146 110 C146 130 148 152 154 170 C162 164 162 140 160 120 Z" fill="#17100c" opacity="0.6" filter="url(#b2)"/>
<path d="M104 60 C98 80 96 100 90 120 M110 50 C104 76 104 100 96 126 M152 60 C156 84 156 104 158 128 M96 130 C94 146 98 158 104 166 M150 128 C150 146 154 158 156 166" stroke="#22150f" stroke-width="1.6" fill="none" opacity="0.45" filter="url(#b1)"/>
<!-- face -->
<path d="M122 100 C120 108 116 114 112 118 L142 116 C139 110 138 104 138 98 Z" fill="#3a2a20" filter="url(#b1)"/>
<path d="M123 54 C118 62 118 78 121 88 C124 96 128 100 131.5 100 C136 99 140 92 141 84 C142.5 74 142 62 138 55 C134 51 127 51 123 54 Z" fill="#4d3c31" filter="url(#b1)"/>
<ellipse cx="130" cy="60" rx="6.5" ry="4" fill="#6a5546" opacity="0.7" filter="url(#b1)"/>
<ellipse cx="127" cy="78" rx="4" ry="5.5" fill="#68523f" opacity="0.65" filter="url(#b1)"/>
<ellipse cx="138" cy="79" rx="2.4" ry="4.5" fill="#5e4a3a" opacity="0.6" filter="url(#b1)"/>
<path d="M132.5 68 C133.5 72 134.5 76 134.8 79.5" stroke="#735c4a" stroke-width="1.6" opacity="0.7" fill="none" filter="url(#b05)"/>
<ellipse cx="127.3" cy="67.6" rx="2.9" ry="1.5" fill="#160d0a" opacity="0.9" filter="url(#b05)"/>
<ellipse cx="137.7" cy="69.2" rx="2.3" ry="1.4" fill="#160d0a" opacity="0.9" filter="url(#b05)"/>
<path d="M123.5 64.5 C126 63 129 63.2 131 64.6 M135.5 66 C137.5 65.2 139.5 65.8 141 67" stroke="#1c110c" stroke-width="1.1" fill="none" opacity="0.85" filter="url(#b05)"/>
<ellipse cx="133.2" cy="81" rx="2.2" ry="1" fill="#241510" opacity="0.8" filter="url(#b05)"/>
<ellipse cx="130.6" cy="88.6" rx="4.3" ry="1.9" fill="#2e1512" opacity="0.95" filter="url(#b05)"/>
<path d="M127 89.8 C129.5 91.5 132.5 91.5 134.5 89.6" stroke="#70433a" stroke-width="1" fill="none" opacity="0.7" filter="url(#b05)"/>
<path d="M120 70 C119 80 121 90 126 98" stroke="#150c09" stroke-width="2.4" fill="none" opacity="0.7" filter="url(#b1)"/>
<!-- hair strands over face edge / part -->
<path d="M131 36 C124 42 120 52 119 64 C118 76 114 90 110 104 M133 37 C140 42 143 52 143 64 C143.5 78 146 92 150 106" stroke="#0f0b09" stroke-width="4" fill="none" filter="url(#b1)"/>
<rect x="0" y="0" width="321" height="244" fill="#000" filter="url(#grn)" opacity="0.3"/>
<!-- channel overlays -->
<g fill="#a6a6a6">
<path d="M284.5 200.5 h9 v3 h-6 v3.2 c6 -1.4 9.5 1.2 9.5 5.2 c0 5 -6 7 -12.5 4.8 l0.8 -3 c4 1.3 7.6 0.8 7.6 -1.8 c0 -2.4 -3.2 -3 -8.4 -1.6 Z"/>
<circle cx="282" cy="202.5" r="1.6" fill="none" stroke="#a6a6a6" stroke-width="1"/>
<rect x="296.5" y="203.5" width="9" height="6.5" rx="0.8" fill="#9a9a9a"/>
</g>
<text x="297.6" y="208.9" font-family="'Liberation Sans',sans-serif" font-size="5.2" font-weight="bold" fill="#2a2a2a" textLength="6.8" lengthAdjust="spacingAndGlyphs">HD</text>
<text x="277" y="225" font-family="'Liberation Sans',sans-serif" font-size="5.4" font-weight="bold" font-style="italic" fill="#a4a4a4" textLength="21.5" lengthAdjust="spacingAndGlyphs">MEDIASET</text>
<text x="18.3" y="27" font-family="'Liberation Sans',sans-serif" font-size="6.2" font-weight="bold" font-style="italic" fill="#e8e8e8" textLength="19.3" lengthAdjust="spacingAndGlyphs">GOTHAM</text>
</g>
</svg>
<svg class="a" style="left:41px;top:279.5px;" width="10" height="14" viewBox="0 0 10 14"><path d="M5 0.3 L8 10.5 L2 10.5 Z" fill="#ff8a00"/><path d="M3.9 4 L6.1 4 L6.8 6.4 L3.2 6.4 Z" fill="#fff"/><path d="M2.6 8.3 L7.4 8.3 L7.9 10 L2.1 10 Z" fill="#fff5e6"/><path d="M0.6 13.4 L1.6 10.4 L8.4 10.4 L9.4 13.4 Z" fill="#ff7a00"/></svg><div class="t" style="left:54px;top:281px;font-size:10.92px;color:#8c8c8c;transform:translate(0.40px,0.90px) scaleX(0.6834) rotate(0.04deg);">Gotham - VLC media player</div><div class="t" style="left:41px;top:304px;font-size:9.86px;color:#a4a4a4;transform:translate(0.00px,0.80px) scaleX(0.7984) rotate(0.04deg);">Médium</div><div class="t" style="left:79px;top:304px;font-size:9.86px;color:#a4a4a4;transform:translate(0.60px,0.80px) scaleX(0.7410) rotate(0.04deg);">Prehrávanie</div><div class="t" style="left:129px;top:304px;font-size:9.86px;color:#a4a4a4;transform:translate(0.20px,0.80px) scaleX(0.7816) rotate(0.04deg);">Zvuk</div><div class="t" style="left:156px;top:304px;font-size:9.86px;color:#a4a4a4;transform:translate(0.00px,0.80px) scaleX(0.7388) rotate(0.04deg);">Video</div><div class="t" style="left:185px;top:304px;font-size:9.86px;color:#a4a4a4;transform:translate(0.20px,0.80px) scaleX(0.7965) rotate(0.04deg);">Titulky</div><div class="t" style="left:217px;top:304px;font-size:9.86px;color:#a4a4a4;transform:translate(0.50px,0.80px) scaleX(0.7572) rotate(0.04deg);">Nástroje</div><div class="t" style="left:255px;top:304px;font-size:9.86px;color:#a4a4a4;transform:translate(0.80px,0.80px) scaleX(0.7710) rotate(0.04deg);">Zobraziť</div><div class="t" style="left:294px;top:304px;font-size:9.86px;color:#a4a4a4;transform:translate(0.30px,0.80px) scaleX(0.7892) rotate(0.04deg);">Pomocník</div><div class="a" style="left:282px;top:286.4px;width:6.6px;height:1px;background:#a6a6a6;"></div><div class="a" style="left:310.8px;top:282.1px;width:6.6px;height:8.6px;background:transparent;border:1px solid #a2a2a2;"></div><svg class="a" style="left:339px;top:282px;" width="9" height="10" viewBox="0 0 9 10"><path d="M0.8 0.2 L7.9 8.8 M7.9 0.2 L0.8 8.8" stroke="#999" stroke-width="0.85" fill="none"/></svg><div class="t" style="left:39px;top:584px;font-size:9.86px;color:#222;transform:translate(0.60px,0.90px) scaleX(0.7173) rotate(0.04deg);">05:59</div><div class="t" style="left:335px;top:584px;font-size:9.86px;color:#222;transform:translate(0.00px,0.90px) scaleX(0.7295) rotate(0.04deg);">00:00</div><div class="a" style="left:68px;top:584.6px;width:257px;height:7px;background:linear-gradient(#cfcfcf,#e0e0e0);border-radius:3.5px;"></div><div class="a" style="left:38.5px;top:598.4px;width:18.5px;height:25.0px;background:#e6e6e6;border:1px solid #c4c4c4;"></div><div class="a" style="left:66px;top:600.5px;width:15px;height:20.100000000000023px;background:#e6e6e6;border:1px solid #c4c4c4;"></div><div class="a" style="left:82.8px;top:600.5px;width:14.900000000000006px;height:20.100000000000023px;background:#e6e6e6;border:1px solid #c4c4c4;"></div><div class="a" style="left:99px;top:600.5px;width:15.5px;height:20.100000000000023px;background:#e6e6e6;border:1px solid #c4c4c4;"></div><div class="a" style="left:123.2px;top:600.5px;width:15.200000000000003px;height:20.100000000000023px;background:#e6e6e6;border:1px solid #c4c4c4;"></div><div class="a" style="left:140px;top:600.5px;width:15px;height:20.100000000000023px;background:#e6e6e6;border:1px solid #c4c4c4;"></div><div class="a" style="left:163.8px;top:600.5px;width:14.899999999999977px;height:20.100000000000023px;background:#e6e6e6;border:1px solid #c4c4c4;"></div><div class="a" style="left:197px;top:600.5px;width:15.300000000000011px;height:20.100000000000023px;background:#e6e6e6;border:1px solid #c4c4c4;"></div><div class="a" style="left:180px;top:600.5px;width:15.699999999999989px;height:20.100000000000023px;background:#cfe4f7;border:1px solid #3c8ad8;border-radius:1px;"></div><div class="a" style="left:43px;top:603.3px;width:4px;height:14.7px;background:#6e6e6e;"></div><div class="a" style="left:48.8px;top:603.3px;width:4px;height:14.7px;background:#6e6e6e;"></div><svg class="a" style="left:60px;top:598px;" width="160" height="26" viewBox="60 598 160 26">
<g fill="#6e6e6e" stroke="none">
<rect x="69" y="606.5" width="1.5" height="8"/><path d="M74.5 606.5 L70.5 610.5 L74.5 614.5 Z M78.5 606.5 L74.5 610.5 L78.5 614.5 Z"/>
<rect x="87" y="607" width="7" height="7"/>
<path d="M102 606.5 L106 610.5 L102 614.5 Z M106 606.5 L110 610.5 L106 614.5 Z"/><rect x="110" y="606.5" width="1.5" height="8"/>
</g>
<g fill="none" stroke="#6e6e6e" stroke-width="1.5">
<path d="M126.5 609 L126.5 606 L129.5 606 M132.5 606 L135.5 606 L135.5 609 M135.5 612.5 L135.5 615.5 L132.5 615.5 M129.5 615.5 L126.5 615.5 L126.5 612.5"/>
<path d="M144 605.5 L144 615.5 M147.5 605.5 L147.5 615.5 M151 605.5 L151 615.5" stroke-width="1.2"/>
<path d="M142.3 608 L145.7 608 M145.8 612.5 L149.2 612.5 M149.3 609.5 L152.7 609.5" stroke-width="2"/>
<path d="M167 606.5 L175.5 606.5 M167 610 L175.5 610 M167 613.5 L172 613.5" stroke-width="1.5"/>
<path d="M184 610 L184 607 L191.5 607 M191.8 611 L191.8 614 L184 614" stroke-width="1.5"/>
<path d="M200.8 606 L207.8 614.6 M200.8 615 L203.6 611.6 M205.6 609 L207.8 606.4" stroke-width="1.3"/>
</g>
<g fill="#6e6e6e"><path d="M173 612 L176.5 613.7 L173 615.4 Z"/><path d="M190 605 L193 607 L190 609 Z"/><path d="M186 612 L183 614 L186 616 Z"/><path d="M209.3 612.4 L209.3 616 L205.8 616 Z"/><path d="M209.3 608.4 L209.3 605 L205.8 605 Z"/></g>
</svg><svg class="a" style="left:292px;top:603px;" width="64" height="22" viewBox="292 603 64 22">
<path d="M295 616 L297 616 L300 613 L300 622.5 L297 619.5 L295 619.5 Z" fill="#6a6a6a"/>
<path d="M301.3 614.5 Q303.3 617.8 301.3 621" fill="none" stroke="#ff9a20" stroke-width="1.3"/>
<defs><linearGradient id="vg" x1="0" x2="1" y1="0" y2="0"><stop offset="0" stop-color="#8fe08f"/><stop offset="1" stop-color="#2fc82f"/></linearGradient></defs><path d="M308 621.8 L336.5 610.8 L336.5 621.8 Z" fill="url(#vg)"/>
<path d="M336.5 611 L352.8 605 L352.8 621.3 L336.5 621.3 Z" fill="#f8f8f8"/>
<path d="M308 621.8 L353.3 604.5 L353.3 621.8 Z" fill="none" stroke="#6a6a6a" stroke-width="1.3" stroke-linejoin="round"/>
</svg><div class="t" style="left:312px;top:605px;font-size:7.21px;color:#777;transform:translate(0.80px,0.80px) scaleX(0.8177) rotate(0.04deg);">78%</div><div class="a" style="left:37.4px;top:628px;width:234px;height:13.6px;background:#f0f0f0;border:1px solid #8e8e8e;border-right-color:#c8c8c8;border-bottom-color:#d8d8d8;"></div><div class="a" style="left:277.9px;top:628px;width:22px;height:13.6px;background:#f4f4f4;border:1px solid #c8c8c8;border-bottom:none;"></div><div class="a" style="left:306.9px;top:628px;width:37.5px;height:13.6px;background:#f4f4f4;border:1px solid #c8c8c8;border-bottom:none;"></div><div class="t" style="left:42px;top:630px;font-size:9.96px;color:#222;transform:translate(0.50px,0.90px) scaleX(0.6548) rotate(0.04deg);">Gotham</div><div class="t" style="left:280px;top:630px;font-size:9.96px;color:#222;transform:translate(0.70px,0.90px) scaleX(0.6813) rotate(0.04deg);">1.00x</div><div class="t" style="left:309px;top:630px;font-size:9.96px;color:#222;transform:translate(0.00px,0.90px) scaleX(0.7775) rotate(0.04deg);">05:59/--:--</div><div class="a" style="left:355px;top:637px;width:1.5px;height:1.5px;background:#bdbdbd;"></div><div class="a" style="left:355px;top:640px;width:1.5px;height:1.5px;background:#bdbdbd;"></div><div class="a" style="left:352px;top:640px;width:1.5px;height:1.5px;background:#bdbdbd;"></div><div class="a" style="left:355px;top:634px;width:1.5px;height:1.5px;background:#bdbdbd;"></div><div class="a" style="left:352px;top:637px;width:1.5px;height:1.5px;background:#bdbdbd;"></div><div class="a" style="left:349px;top:640px;width:1.5px;height:1.5px;background:#bdbdbd;"></div><div class="bar" style="left:0px;top:804px;width:79.6px;"><div class="seg g" style="left:-1px;width:80px;"></div></div><div class="bar" style="left:0px;top:824.5px;width:79.6px;"><div class="seg g" style="left:-1px;width:80px;"></div></div><div class="bar" style="left:83px;top:804px;width:515.3px;"><div class="seg r" style="left:-1px;width:52px;"></div><div class="seg y" style="left:51px;width:206px;"></div><div class="seg g" style="left:257px;width:62.5px;"></div><div class="seg e" style="left:319.5px;width:195.5px;"></div></div><div class="bar" style="left:83px;top:824.5px;width:515.3px;"><div class="seg r" style="left:-1px;width:52px;"></div><div class="seg y" style="left:51px;width:206px;"></div><div class="seg g" style="left:257px;width:258px;"></div></div><div class="bar" style="left:601.3px;top:804px;width:515.7px;"><div class="seg r" style="left:-1.2999999999999545px;width:111.5px;"></div><div class="seg y" style="left:110.20000000000005px;width:183.5px;"></div><div class="seg g" style="left:293.70000000000005px;width:222px;"></div></div><div class="bar" style="left:601.3px;top:824.5px;width:515.7px;"><div class="seg r" style="left:-1.2999999999999545px;width:171.5px;"></div><div class="seg y" style="left:170.20000000000005px;width:128.5px;"></div><div class="seg g" style="left:298.70000000000005px;width:26px;"></div><div class="seg e" style="left:324.70000000000005px;width:191px;"></div></div><div class="bar" style="left:1120px;top:804px;width:81px;"><div class="seg g" style="left:-1px;width:82px;"></div></div><div class="bar" style="left:1120px;top:824.5px;width:81px;"><div class="seg g" style="left:-1px;width:82px;"></div></div><div class="t" style="left:1px;top:808px;font-size:9.54px;color:#111;transform:translate(0.70px,0.80px) scaleX(0.7147) rotate(0.04deg);">Present</div><div class="t" style="left:1px;top:829px;font-size:9.54px;color:#111;transform:translate(0.70px,0.20px) scaleX(0.7047) rotate(0.04deg);">Lock</div><div class="t" style="left:86px;top:808px;font-size:9.54px;color:#111;transform:translate(0.40px,0.80px) scaleX(0.7118) rotate(0.04deg);">Level: 62%</div><div class="t" style="left:86px;top:829px;font-size:9.54px;color:#111;transform:translate(0.40px,0.20px) scaleX(0.7105) rotate(0.04deg);">Quality: 100%</div><div class="t" style="left:603px;top:808px;font-size:9.54px;color:#111;transform:translate(0.30px,0.80px) scaleX(0.6956) rotate(0.04deg);">BER: 0,0000000</div><div class="t" style="left:605px;top:829px;font-size:9.54px;color:#111;transform:translate(0.00px,0.20px) scaleX(0.7254) rotate(0.04deg);">SNR: 12,6 dB (Margin: 6,0 dB | OK)</div><div class="t" style="left:1122px;top:808px;font-size:9.54px;color:#111;transform:translate(0.00px,0.80px) scaleX(0.7508) rotate(0.04deg);">Input (~21,39 Mbps)</div><div class="t" style="left:1122px;top:829px;font-size:9.54px;color:#111;transform:translate(0.00px,0.20px) scaleX(0.6773) rotate(0.04deg);">Sync TS</div><div class="a" style="left:0px;top:847px;width:1200px;height:1px;background:#dadada;"></div><div class="a" style="left:0px;top:867.5px;width:1200px;height:2.5px;background:#c6c6c6;"></div><div class="a" style="left:796px;top:849px;width:1px;height:17px;background:#a8a8a8;"></div><div class="a" style="left:1197px;top:849px;width:1px;height:17px;background:#a8a8a8;"></div><div class="t" style="left:148px;top:852px;font-size:10.6px;color:#111;transform:translate(0.20px,0.20px) scaleX(0.7099) rotate(0.04deg);">Locked -&gt; Uptime: 09:11:27</div><div class="t" style="left:555px;top:852px;font-size:10.6px;color:#111;transform:translate(0.00px,0.20px) scaleX(0.6634) rotate(0.04deg);">SYNC 20 | TEI 0 | CC 477</div><div class="t" style="left:931px;top:852px;font-size:10.6px;color:#111;transform:translate(0.30px,0.20px) scaleX(0.7006) rotate(0.04deg);">Best signal: 12,7 dB (2023-01-06 03:27)</div>
</div>
</body>
</html>
